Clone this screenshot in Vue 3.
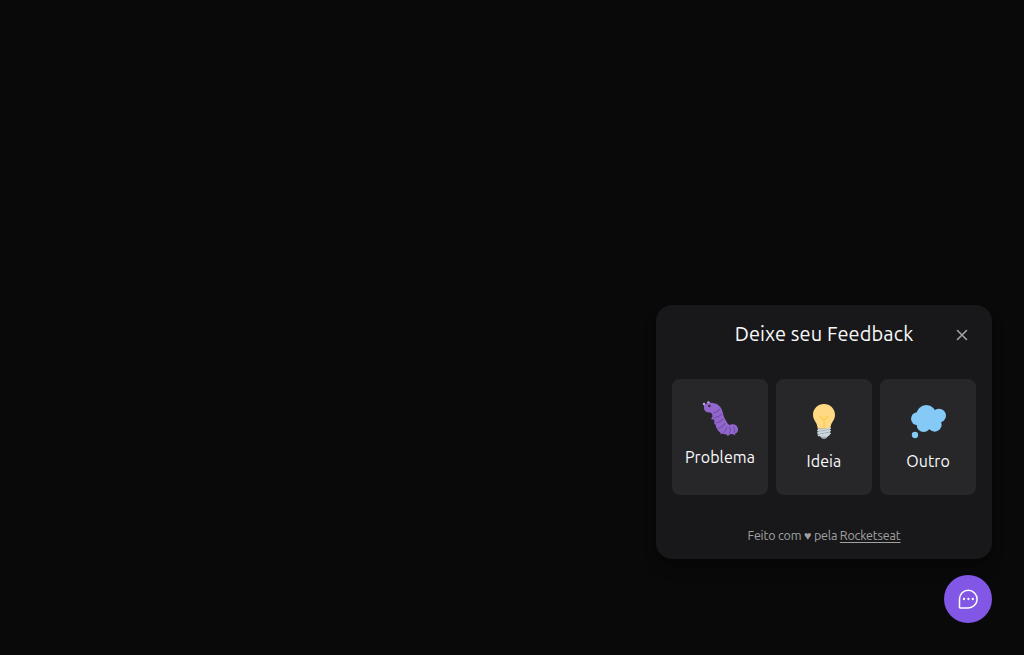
<script setup>
</script>

<template>
  <main class="page">
    <div class="widget">
      <section class="card">
        <header class="head">
          <h1 class="title">Deixe seu Feedback</h1>
          <button class="close" title="Fechar">
            <svg width="16" height="16" viewBox="0 0 16 16" fill="none" stroke="#a1a1aa" stroke-width="1.6" stroke-linecap="round"><path d="M3.5 3.5l9 9M12.5 3.5l-9 9" /></svg>
          </button>
        </header>

        <div class="options">
          <button class="option problem">
            <svg class="icon" viewBox="30 27 120 120">
              <path d="M56 44L55 35M45 48L41 39" stroke="#9266cc" stroke-width="4" />
              <circle cx="55.500" cy="37" r="3.6" fill="#c5a6ea" />
              <circle cx="42" cy="42" r="3.6" fill="#c5a6ea" />
              <path d="M68 78l-5 10 10 1M73 92l0 11 9-2M91 121l1 12 11-6M109 130l4 9 8-7M127 127l6 10 4-10" fill="#9266cc" />
              <path d="M42 52C42 41 55 36 69 39C86 41 95 53 98 67C100 79 105 87 110 96C114 104 118 105 122 104C132 99 144 107 144 118C144 130 133 135 122 132C107 136 91 131 83 120C75 108 76 96 71 86C67 77 66 69 60 67C50 70 41 62 42 52Z" fill="#9266cc" />
              <g fill="none" stroke="#7450a8" stroke-width="3.6" stroke-linecap="round">
                <path d="M71 69Q82 67 89 58" />
                <path d="M75 83Q87 81 94 73" />
                <path d="M79 99Q92 95 99 87" />
                <path d="M87 115Q99 110 105 101" />
                <path d="M102 127Q110 120 110 111" />
                <path d="M118 129Q124 121 119 111" />
                <path d="M133 127Q136 119 131 110" />
              </g>
              <circle cx="58" cy="48" r="3.7" fill="#292f33" />
            </svg>
            <span class="label">Problema</span>
          </button>
          <button class="option">
            <svg class="icon" viewBox="12 18 120 120">
              <path d="M72 27C90 27 105 41 105 59C105 77 92 80 91 101H53C52 80 39 77 39 59C39 41 54 27 72 27Z" fill="#ffd983" />
              <path d="M72 99V75M59 63L72 75L85 63" fill="none" stroke="#ffcc4d" stroke-width="4.2" stroke-linecap="round" />
              <path d="M54 101H90V117Q89 122 84 124Q80 131 72 131Q64 131 60 124Q55 122 54 117Z" fill="#ccd6dd" />
              <path d="M61 125H83Q79 131 72 131Q65 131 61 125Z" fill="#99aab5" />
              <path d="M54 109L90 103M54 118L90 111" stroke="#99aab5" stroke-width="3" stroke-linecap="round" />
              <path d="M53 106L91 100M53 114L91 107M55 122L91 115" stroke="#ccd6dd" stroke-width="4" stroke-linecap="round" />
            </svg>
            <span class="label">Ideia</span>
          </button>
          <button class="option">
            <svg class="icon" viewBox="24 18 120 120" fill="#85c9f7">
              <circle cx="79" cy="60" r="30" />
              <circle cx="117" cy="62" r="21" />
              <circle cx="52" cy="71" r="19" />
              <circle cx="71" cy="90" r="21" />
              <circle cx="104" cy="89" r="21" />
              <path d="M79 35L118 60L105 93L67 90Z" />
              <circle cx="45" cy="120" r="9.5" />
            </svg>
            <span class="label">Outro</span>
          </button>
        </div>

        <footer class="foot"><span>Feito com ♥ pela </span><a class="link">Rocketseat</a></footer>
      </section>

      <button class="launcher" title="Feedback">
        <svg width="24" height="24" viewBox="0 0 24 24">
          <path d="M3.5 20.3V12A8.8 8.8 0 1 1 12.3 20.9H4.1A.6.6 0 0 1 3.5 20.3Z" fill="none" stroke="#fff" stroke-width="1.5" />
          <g fill="#fff"><circle cx="8" cy="12" r="1.15" /><circle cx="12.4" cy="12" r="1.15" /><circle cx="16.8" cy="12" r="1.15" /></g>
        </svg>
      </button>
    </div>
  </main>
</template>

<style>
body { background: #09090a; }
</style>

<style scoped>
.page {
  box-sizing: border-box;
  height: 655px;
  padding: 32px;
  display: flex;
  justify-content: flex-end;
  align-items: flex-end;
  background: #09090a;
  font-family: Ubuntu, "Noto Sans", sans-serif;
  color: #fafafa;
}
button { border: 0; padding: 0; margin: 0; font: inherit; color: inherit; }
svg { display: block; flex: none; }
.widget { display: flex; flex-direction: column; align-items: flex-end; gap: 16px; }
.card {
  box-sizing: border-box;
  width: 336px;
  height: 254px;
  padding: 16px;
  border-radius: 16px;
  background: #18181b;
  box-shadow: 0 10px 15px -3px rgba(0, 0, 0, .3), 0 4px 6px -4px rgba(0, 0, 0, .3);
}
.head { display: grid; grid-template-columns: 28px 1fr 28px; align-items: center; height: 28px; }
.title { grid-column: 2; margin: 0; padding-bottom: 2px; font-size: 20px; line-height: 24px; font-weight: 400; letter-spacing: .1px; text-align: center; white-space: nowrap; }
.close { background: none; width: 28px; height: 24px; display: grid; place-items: center; }
.options { display: flex; gap: 8px; margin-top: 30px; }
.option {
  box-sizing: border-box;
  width: 96px;
  height: 116px;
  padding-top: 22px;
  border-radius: 8px;
  background: #27272a;
  display: flex;
  flex-direction: column;
  align-items: center;
  gap: 8px;
}
.problem { padding-top: 20px; gap: 6px; }
.icon { width: 40px; height: 40px; }
.label { font-size: 16px; line-height: 24px; letter-spacing: .08px; white-space: nowrap; }
.foot { margin-top: 31px; font-size: 12.5px; line-height: 18px; letter-spacing: -.18px; color: #a1a1a1; text-align: center; white-space: nowrap; }
.link { text-decoration: underline; text-underline-offset: 2px; text-decoration-thickness: 1px; }
.launcher { width: 48px; height: 48px; border-radius: 50%; background: #8257e5; display: grid; place-items: center; }
</style>
